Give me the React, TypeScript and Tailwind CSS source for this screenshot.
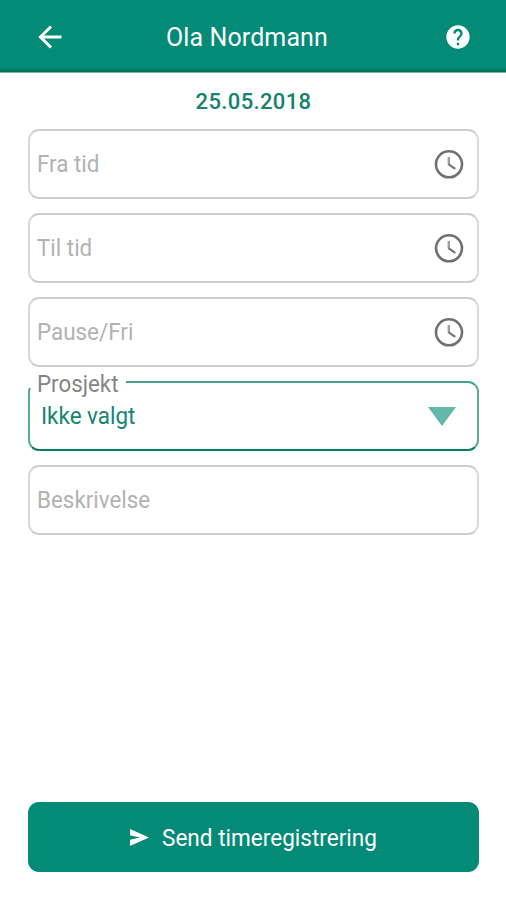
import React from "react";

function Clock() {
  return (
    <svg viewBox="0 0 30 30" className="size-[30px]" fill="none">
      <circle cx="15" cy="15.3" r="13" stroke="#717171" strokeWidth="2.6" />
      <path d="M14.8 8v7.6" stroke="#a0a0a0" strokeWidth="2.4" />
      <path d="M14.4 15.2l6.9 4.6" stroke="#747474" strokeWidth="2.2" />
    </svg>
  );
}

function Field({ label, clock = false }: { label: string; clock?: boolean }) {
  return (
    <div className="flex h-[70px] items-center justify-between rounded-[11px] border-2 border-x-[#dadada] border-y-[#cecece] pl-[7px] pr-[13px] text-[23.5px] text-[#b2b2b2]">
      <span className="origin-left translate-y-[1px] scale-x-[0.953] whitespace-nowrap">{label}</span>
      {clock && <Clock />}
    </div>
  );
}

export default function App() {
  return (
    <div className="flex h-[900px] w-[506px] flex-col bg-white font-['Roboto',sans-serif]">
      <header className="grid h-[73px] grid-cols-[80px_1fr_80px] items-center border-b border-[#7caea5] bg-linear-to-b from-[#038b77] from-94% to-[#046b59] pt-[2px] text-white">
        <svg viewBox="0 0 24 24" className="ml-[38px] size-[24px]" fill="none" stroke="currentColor" strokeWidth="3">
          <path d="M23.5 12H3M13 1.5L2.5 12 13 22.5" />
        </svg>
        <h1 className="translate-x-[-6px] translate-y-[1px] text-center text-[25px] tracking-[0.1px]">Ola Nordmann</h1>
        <svg viewBox="0 0 24 24" className="ml-[18px] size-[28px]" fill="currentColor">
          <path d="M12 2C6.48 2 2 6.48 2 12s4.48 10 10 10 10-4.48 10-10S17.52 2 12 2zm1 17h-2v-2h2v2zm2.07-7.75-.9.92C13.45 12.9 13 13.5 13 15h-2v-.5c0-1.1.45-2.1 1.17-2.83l1.24-1.26c.37-.36.59-.86.59-1.41 0-1.1-.9-2-2-2s-2 .9-2 2H8c0-2.21 1.79-4 4-4s4 1.79 4 4c0 .88-.36 1.68-.93 2.25z" />
        </svg>
      </header>
      <main className="flex flex-1 flex-col gap-[14px] pl-[28px] pr-[27px]">
        <div className="mb-[-14px] flex h-[56px] items-center justify-center text-[22px] font-medium tracking-[0.35px] text-[#13836b]">25.05.2018</div>
        <Field label="Fra tid" clock />
        <Field label="Til tid" clock />
        <Field label="Pause/Fri" clock />
        <div className="relative flex h-[70px] items-center justify-between rounded-[11px] border-2 border-x-[#5aaa95] border-t-[#48a38c] border-b-[#087b63] pl-[11px] pr-[21px] text-[23.5px] text-[#168670]">
          <span className="absolute -top-[13px] left-0 -ml-[2px] w-[98px] bg-white pl-[9px] leading-[18px] text-[#858585]">
            <span className="inline-block origin-left translate-y-[5px] scale-x-[0.95]">Prosjekt</span>
          </span>
          <span className="origin-left translate-y-[1px] scale-x-[0.955]">Ikke valgt</span>
          <svg viewBox="0 0 28 19" className="h-[19px] w-[28px]" fill="#62b9ab"><path d="M0 0h28L14 19z" /></svg>
        </div>
        <Field label="Beskrivelse" />
        <button className="mt-auto mb-[28px] flex h-[70px] items-center justify-center rounded-[11px] bg-[#038b77] text-[24px] text-white">
          <svg viewBox="0 0 19 17" className="ml-[13px] mr-[13px] h-[17px] w-[19px]" fill="currentColor"><path d="M0 0l19 8.5L0 17v-6.3l10-2.2L0 6.3z" /></svg>
          <span className="mr-[-13px] origin-left translate-y-[1px] scale-x-[0.94] pr-[13px]">Send timeregistrering</span>
        </button>
      </main>
    </div>
  );
}
